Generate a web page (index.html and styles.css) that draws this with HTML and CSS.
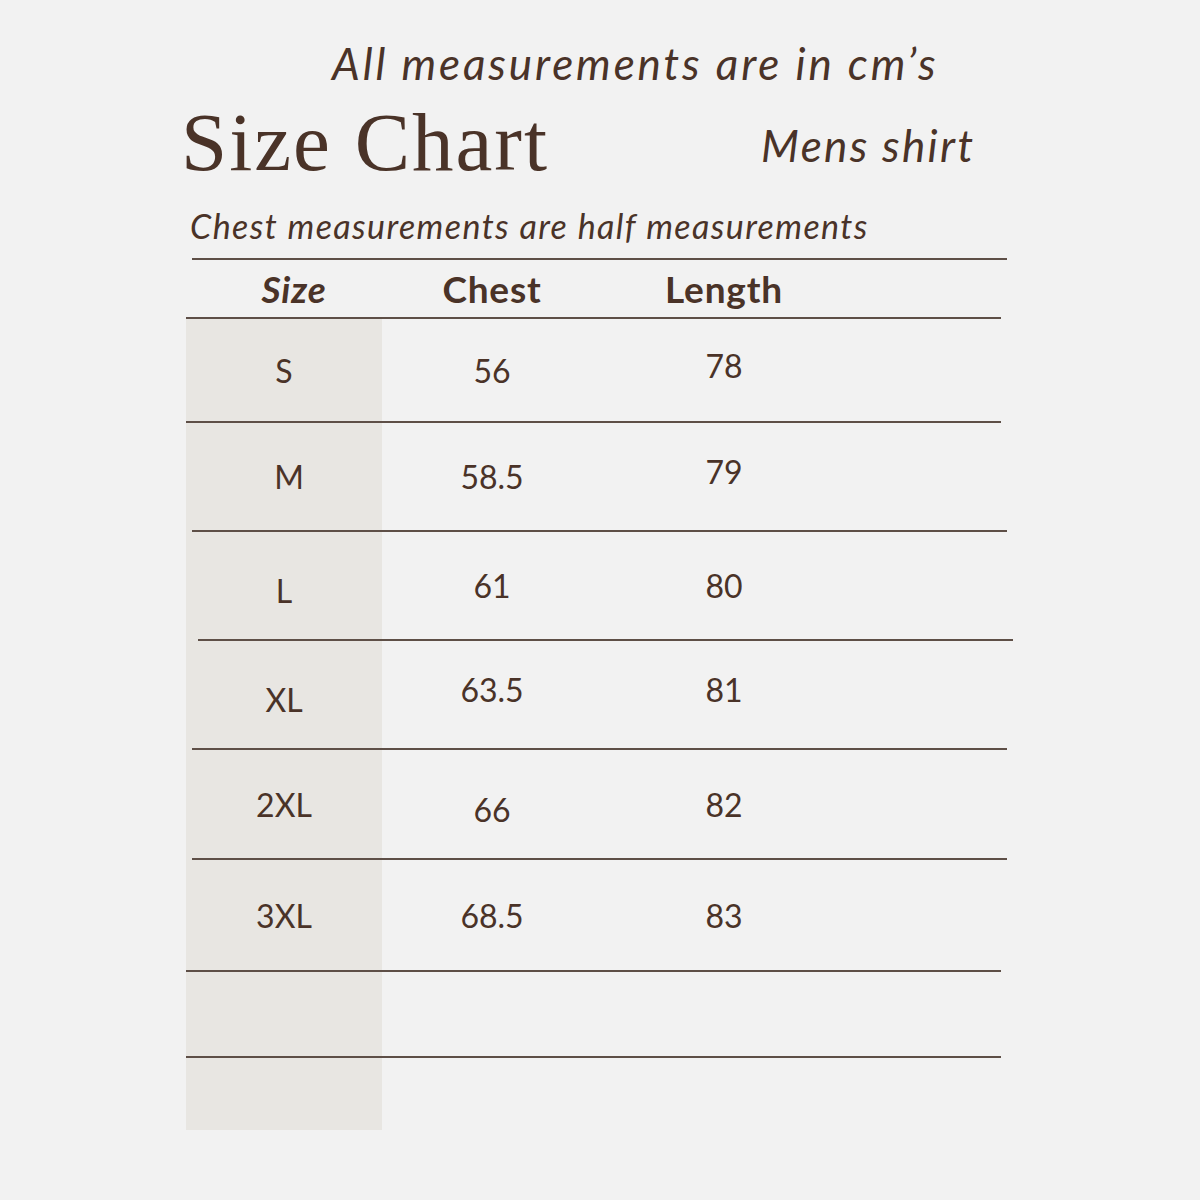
FILE: index.html
```html
<!DOCTYPE html>
<html lang="en">
<head>
<meta charset="utf-8">
<title>Size Chart</title>
<link rel="stylesheet" href="styles.css">
</head>
<body>
<main class="page">
  <p class="note">All measurements are in cm’s</p>
  <div class="title-row">
    <h1 class="title">Size Chart</h1>
    <p class="subtitle">Mens shirt</p>
  </div>
  <p class="caption">Chest measurements are half measurements</p>
  <section class="chart">
    <div class="rule shift-6"></div>
    <div class="row head">
      <span class="cell h-size">Size</span>
      <span class="cell">Chest</span>
      <span class="cell">Length</span>
    </div>
    <div class="body">
      <div class="rule"></div>
      <div class="row r1"><span class="cell">S</span><span class="cell">56</span><span class="cell up">78</span></div>
      <div class="rule"></div>
      <div class="row r2"><span class="cell nudge">M</span><span class="cell">58.5</span><span class="cell up">79</span></div>
      <div class="rule shift-6"></div>
      <div class="row r3"><span class="cell down">L</span><span class="cell">61</span><span class="cell">80</span></div>
      <div class="rule shift-12"></div>
      <div class="row r4"><span class="cell down">XL</span><span class="cell up">63.5</span><span class="cell up">81</span></div>
      <div class="rule shift-6"></div>
      <div class="row r5"><span class="cell">2XL</span><span class="cell down">66</span><span class="cell">82</span></div>
      <div class="rule shift-6"></div>
      <div class="row r6"><span class="cell">3XL</span><span class="cell">68.5</span><span class="cell">83</span></div>
      <div class="rule"></div>
      <div class="row r7"></div>
      <div class="rule"></div>
      <div class="row r8"></div>
    </div>
  </section>
</main>
</body>
</html>
```

FILE: styles.css
```css
* { box-sizing: border-box; }
html, body { margin: 0; padding: 0; }
body {
  background: #f2f2f2;
  color: #4a3328;
  font-family: Lato, "Liberation Sans", sans-serif;
  width: 1200px;
  height: 1200px;
  overflow: hidden;
}
.page { padding-top: 37px; }
.note {
  margin: 0 0 0 332px;
  font-style: italic;
  font-size: 44px;
  line-height: 53px;
  letter-spacing: 2.9px;
}
.title-row {
  display: flex;
  align-items: flex-start;
  margin-top: 2px;
}
.title {
  margin: 0 0 0 181px;
  font-family: "Liberation Serif", "DejaVu Serif", serif;
  font-weight: 400;
  font-size: 83px;
  line-height: 100px;
  letter-spacing: 2px;
}
.subtitle {
  margin: 27px 0 0 212px;
  font-style: italic;
  font-size: 44px;
  line-height: 53px;
  letter-spacing: 2.3px;
}
.caption {
  margin: 13px 0 0 190px;
  font-style: italic;
  font-size: 34px;
  line-height: 41px;
  letter-spacing: 1.4px;
}
.chart {
  margin: 12px 0 0 186px;
  width: 815px;
}
.rule {
  height: 2px;
  background: #5e4f47;
}
.shift-6 { margin-left: 6px; margin-right: -6px; }
.shift-12 { margin-left: 12px; margin-right: -12px; }
.row {
  display: grid;
  grid-template-columns: 196px 220px 244px 1fr;
  align-items: center;
  font-size: 32px;
}
.cell { text-align: center; }
.head {
  height: 57px;
  align-items: end;
  padding-bottom: 6px;
  font-weight: 700;
  font-size: 37px;
  letter-spacing: 0.8px;
}
.h-size { font-style: italic; padding-left: 20px; }
.body {
  background: linear-gradient(to right, #e8e6e2 196px, transparent 196px);
}
.r1 { height: 102px; }
.r2 { height: 107px; }
.r3 { height: 107px; }
.r4 { height: 107px; }
.r5 { height: 108px; }
.r6 { height: 110px; }
.r7 { height: 84px; }
.r8 { height: 72px; }
.nudge { padding-left: 10px; }
.up { padding-bottom: 10px; }
.down { padding-top: 10px; }
```
